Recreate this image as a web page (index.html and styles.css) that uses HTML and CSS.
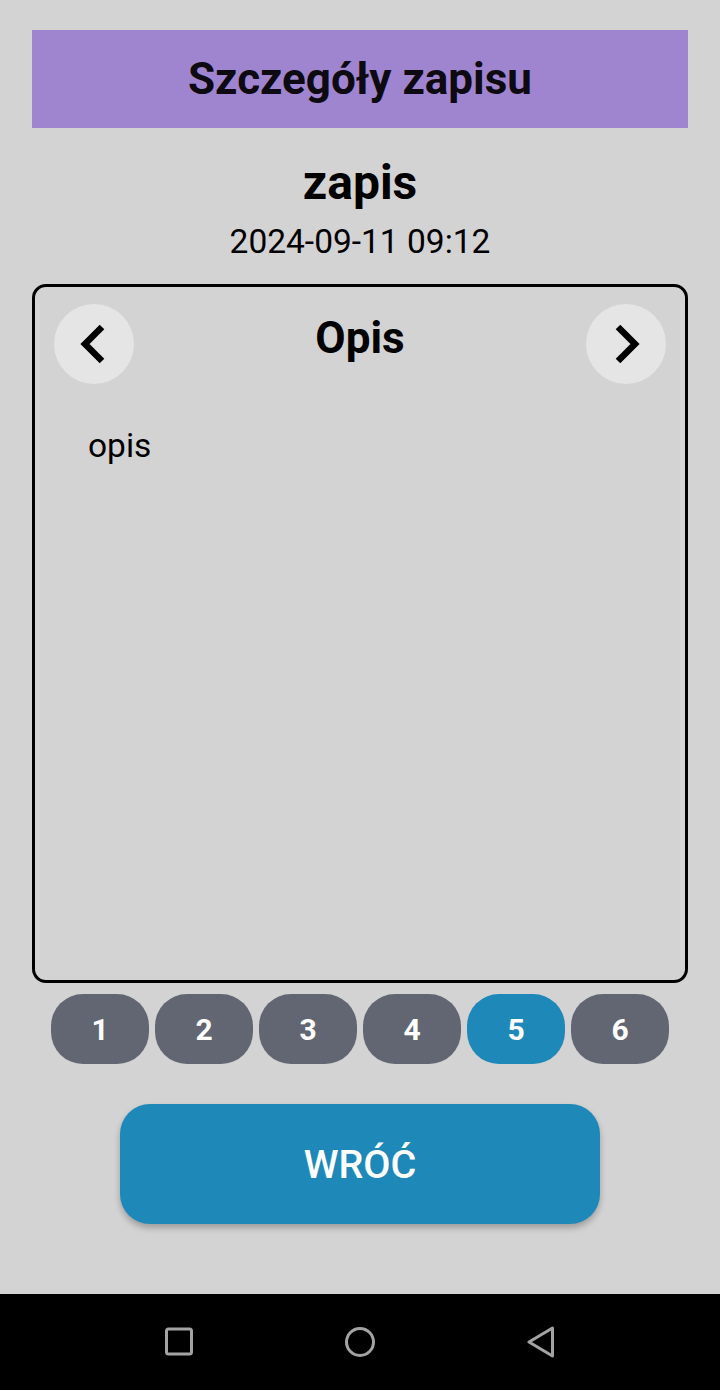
FILE: index.html
```html
<!DOCTYPE html>
<html lang="pl">
<head>
<meta charset="utf-8">
<link rel="stylesheet" href="styles.css">
</head>
<body>
<div class="screen">
  <main class="content">
    <header class="topbar"><h1>Szczegóły zapisu</h1></header>
    <h2 class="entry-title">zapis</h2>
    <div class="entry-date">2024-09-11 09:12</div>
    <section class="card">
      <div class="card-head">
        <button class="nav-btn" aria-label="Poprzedni">
          <svg width="80" height="80" viewBox="0 0 80 80"><path d="M48 23 L31 40 L48 57" fill="none" stroke="#000" stroke-width="6.5" stroke-linecap="butt"/></svg>
        </button>
        <div class="card-title">Opis</div>
        <button class="nav-btn" aria-label="Następny">
          <svg width="80" height="80" viewBox="0 0 80 80"><path d="M32 23 L49 40 L32 57" fill="none" stroke="#000" stroke-width="6.5" stroke-linecap="butt"/></svg>
        </button>
      </div>
      <div class="card-body">opis</div>
    </section>
    <nav class="pager">
      <button class="pill">1</button>
      <button class="pill">2</button>
      <button class="pill">3</button>
      <button class="pill">4</button>
      <button class="pill active">5</button>
      <button class="pill">6</button>
    </nav>
    <button class="back-btn">WRÓĆ</button>
  </main>
  <footer class="sysnav">
    <svg width="30" height="30" viewBox="0 0 30 30"><rect x="2.5" y="2" width="25" height="25" rx="2" fill="none" stroke="#a3a3a3" stroke-width="3"/></svg>
    <svg width="32" height="32" viewBox="0 0 32 32"><circle cx="16" cy="16" r="13.5" fill="none" stroke="#a3a3a3" stroke-width="3"/></svg>
    <svg width="30" height="32" viewBox="0 0 30 32"><path d="M26.5 2 L3 16 L26.5 30 Z" fill="none" stroke="#a3a3a3" stroke-width="3" stroke-linejoin="round"/></svg>
  </footer>
</div>
</body>
</html>
```

FILE: styles.css
```css
* { box-sizing: border-box; }
html, body { margin: 0; padding: 0; }
body {
  background: #d3d3d3;
  font-family: Roboto, "Noto Sans", "Liberation Sans", sans-serif;
  color: #000;
}
.screen {
  width: 720px;
  height: 1390px;
  display: flex;
  flex-direction: column;
}
.content {
  flex: 1;
  display: flex;
  flex-direction: column;
  align-items: center;
  padding: 30px 32px 0;
}
.topbar {
  width: 100%;
  height: 98px;
  background: #9f85d0;
  display: flex;
  align-items: center;
  justify-content: center;
}
.topbar h1 {
  margin: 0;
  font-size: 44px;
  font-weight: 700;
  color: #0d0a12;
  line-height: 52px;
}
.entry-title {
  margin: 28px 0 0;
  font-size: 48px;
  font-weight: 700;
  line-height: 54px;
}
.entry-date {
  margin-top: 12px;
  font-size: 33.5px;
  line-height: 40px;
}
.card {
  margin-top: 22px;
  width: 100%;
  height: 699px;
  border: 3px solid #000;
  border-radius: 14px;
  padding: 17px 19px;
  display: flex;
  flex-direction: column;
}
.card-head {
  display: flex;
  align-items: flex-start;
  justify-content: space-between;
}
.nav-btn {
  width: 80px;
  height: 80px;
  border-radius: 50%;
  border: none;
  background: #e5e5e5;
  padding: 0;
  display: flex;
  align-items: center;
  justify-content: center;
}
.card-title {
  font-size: 44px;
  font-weight: 700;
  line-height: 52px;
  margin-top: 8px;
}
.card-body {
  margin-top: 42px;
  padding-left: 34px;
  font-size: 33.5px;
  line-height: 40px;
}
.pager {
  margin-top: 11px;
  display: flex;
  gap: 6px;
}
.pill {
  width: 98px;
  height: 70px;
  border: none;
  border-radius: 32px;
  background: #616672;
  color: #fff;
  font-family: Roboto, "Noto Sans", sans-serif;
  font-size: 30px;
  font-weight: 700;
  padding: 0;
}
.pill.active { background: #1e88b8; }
.back-btn {
  margin-top: 40px;
  width: 480px;
  height: 120px;
  border: none;
  border-radius: 30px;
  background: #1e88b8;
  color: #fff;
  font-family: Roboto, "Noto Sans", sans-serif;
  font-size: 39.5px;
  font-weight: 500;
  box-shadow: 0 4px 6px rgba(0,0,0,0.25);
}
.sysnav {
  height: 96px;
  background: #000;
  display: flex;
  align-items: center;
  justify-content: center;
  gap: 150px;
}
```
